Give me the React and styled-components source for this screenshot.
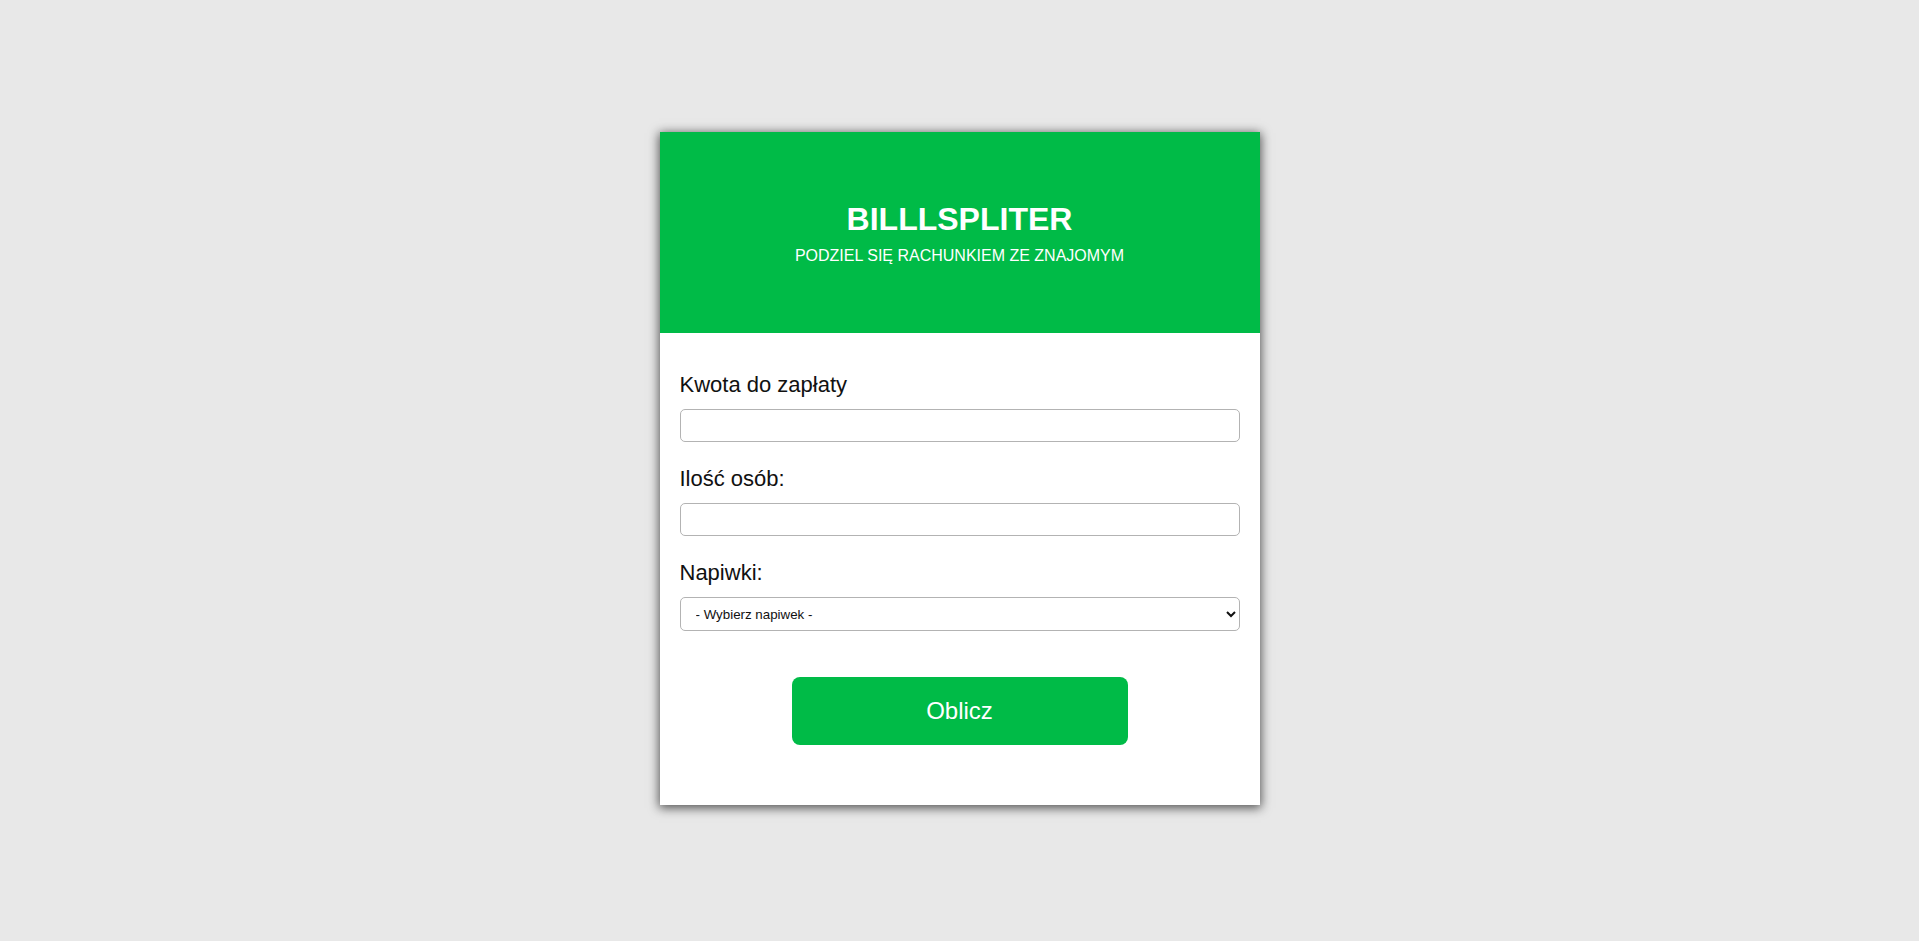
import styled, { createGlobalStyle } from 'styled-components'

const GlobalStyle = createGlobalStyle`
  * {
    box-sizing: border-box;
  }

  body {
    margin: 0;
    background-color: #e8e8e8;
    font-family: 'Liberation Sans', Arial, sans-serif;
  }
`

const Page = styled.div`
  min-height: 100vh;
  display: flex;
  justify-content: center;
  align-items: flex-start;
  padding-top: 132px;
`

const Card = styled.div`
  width: 600px;
  background-color: #fff;
  box-shadow: 0 2px 10px 1px rgba(0, 0, 0, 0.65);
`

const Header = styled.header`
  height: 201px;
  display: flex;
  flex-direction: column;
  align-items: center;
  justify-content: center;
  background-color: #00bb47;
  color: #fff;
`

const Title = styled.h1`
  margin: 0 0 9px;
  font-size: 32px;
  font-weight: 700;
`

const Subtitle = styled.p`
  margin: 0;
  font-size: 16px;
  text-transform: uppercase;
`

const Body = styled.form`
  padding: 40px 20px 60px;
`

const Field = styled.div`
  margin-bottom: ${({ last }) => (last ? '0' : '25px')};
`

const Label = styled.label`
  display: block;
  margin-bottom: 12px;
  font-size: 22px;
  line-height: 24px;
  color: #111;
`

const Input = styled.input`
  display: block;
  width: 100%;
  height: 33px;
  padding: 0 8px;
  border: 1px solid #b3b3b3;
  border-radius: 5px;
  font-family: inherit;
  font-size: 16px;
  background: #fff;

  &:focus {
    outline: none;
    border-color: #00bb47;
  }
`

const Select = styled.select`
  display: block;
  width: 100%;
  height: 34px;
  padding: 0 8px 0 11px;
  border: 1px solid #b3b3b3;
  border-radius: 5px;
  font-family: 'Liberation Sans', Arial, sans-serif;
  font-size: 13.33px;
  color: #111;
  background-color: #fff;
`

const Actions = styled.div`
  display: flex;
  justify-content: center;
  margin-top: 46px;
`

const Button = styled.button`
  width: 60%;
  height: 68px;
  border: none;
  border-radius: 8px;
  background-color: #00bb47;
  color: #fff;
  font-family: inherit;
  font-size: 24px;
  cursor: pointer;

  &:hover {
    background-color: #00a83f;
  }
`

export default function App() {
  return (
    <>
      <GlobalStyle />
      <Page>
        <Card>
          <Header>
            <Title>BILLLSPLITER</Title>
            <Subtitle>Podziel się rachunkiem ze znajomym</Subtitle>
          </Header>
          <Body onSubmit={(e) => e.preventDefault()}>
            <Field>
              <Label htmlFor="price">Kwota do zapłaty</Label>
              <Input id="price" type="number" />
            </Field>
            <Field>
              <Label htmlFor="people">Ilość osób:</Label>
              <Input id="people" type="number" />
            </Field>
            <Field last>
              <Label htmlFor="tip">Napiwki:</Label>
              <Select id="tip" defaultValue="">
                <option value="">- Wybierz napiwek -</option>
                <option value="0.05">5%</option>
                <option value="0.1">10%</option>
                <option value="0.15">15%</option>
                <option value="0.2">20%</option>
              </Select>
            </Field>
            <Actions>
              <Button type="submit">Oblicz</Button>
            </Actions>
          </Body>
        </Card>
      </Page>
    </>
  )
}
